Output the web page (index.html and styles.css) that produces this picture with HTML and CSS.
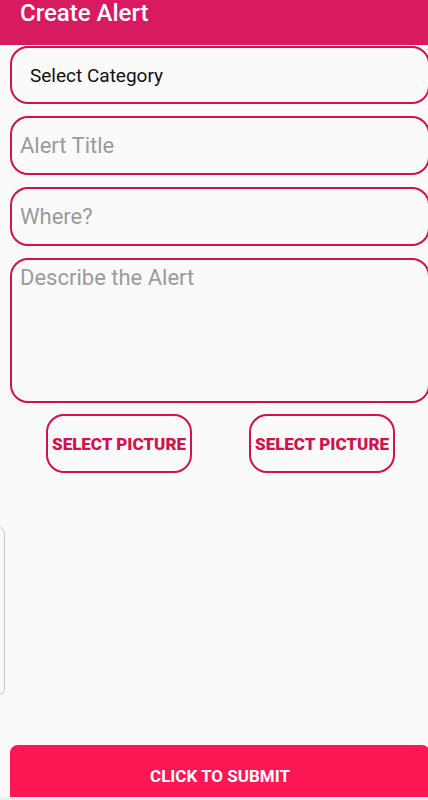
FILE: index.html
```html
<!DOCTYPE html>
<html>
  <head>
    <title>Create Alert</title>
    <meta charset="UTF-8">
    <meta name="viewport" content="width=device-width, initial-scale=1.0">
    <link rel="stylesheet" href="styles.css">
  </head>
  <body>
    <div class="toolbar">
      <h1>Create Alert</h1>
    </div>
    <form class="alert-form">
      <div class="field spinner">Select Category</div>
      <input type="text" class="field" placeholder="Alert Title">
      <input type="text" class="field" placeholder="Where?">
      <textarea class="field area" placeholder="Describe the Alert"></textarea>
      <div class="pictures">
        <button type="button" class="pick">SELECT PICTURE</button>
        <button type="button" class="pick">SELECT PICTURE</button>
      </div>
      <div class="preview"></div>
      <button type="submit" class="submit">CLICK TO SUBMIT</button>
    </form>
    <div class="navbar"></div>
  </body>
</html>
```
FILE: styles.css
```css
body {
  font-family: Roboto, "Noto Sans", sans-serif;
  margin: 0;
  padding: 0;
  background-color: #fafafa;
  overflow: hidden;
}
.toolbar {
  height: 45px;
  background-color: #d81b60;
  padding-left: 20px;
}
.toolbar h1 {
  margin: 0;
  color: #fff;
  font-size: 24px;
  font-weight: 500;
  line-height: 26px;
}
.alert-form {
  display: flex;
  flex-direction: column;
  padding-left: 10px;
  padding-top: 1px;
}
.field {
  box-sizing: border-box;
  width: 420px;
  height: 59px;
  margin: 0 0 12px 0;
  border: 2px solid #d0124f;
  border-radius: 18px;
  background-color: #fafafa;
  font-family: Roboto, sans-serif;
  font-size: 22px;
  color: #222;
  padding: 0 8px;
  outline: none;
}
.field::placeholder {
  color: #9b9b9b;
}
.spinner {
  height: 58px;
  display: flex;
  align-items: center;
  padding-left: 18px;
  font-size: 19px;
  color: #111;
}
.area {
  height: 145px;
  margin-bottom: 11px;
  padding-top: 5px;
  resize: none;
  line-height: 26px;
}
.pictures {
  display: flex;
  gap: 57px;
  padding-left: 36px;
}
.pick {
  box-sizing: border-box;
  width: 146px;
  height: 59px;
  padding: 0;
  border: 2px solid #d0124f;
  border-radius: 18px;
  background-color: #fafafa;
  color: #d0124f;
  font-family: Roboto, sans-serif;
  font-size: 17px;
  font-weight: 900;
}
.preview {
  box-sizing: border-box;
  width: 200px;
  height: 168px;
  margin: 54px 0 50px -205px;
  border: 1px solid #c8c8c8;
  border-radius: 6px;
}
.submit {
  box-sizing: border-box;
  width: 420px;
  height: 52px;
  border: none;
  border-radius: 8px 8px 0 0;
  background-color: #ff1654;
  color: #fff;
  font-family: Roboto, sans-serif;
  font-size: 17px;
  font-weight: bold;
  padding: 10px 0 0 0;
  line-height: 20px;
  text-align: center;
  display: block;
}
.navbar {
  height: 3px;
  background-color: #eeeeee;
}
```
